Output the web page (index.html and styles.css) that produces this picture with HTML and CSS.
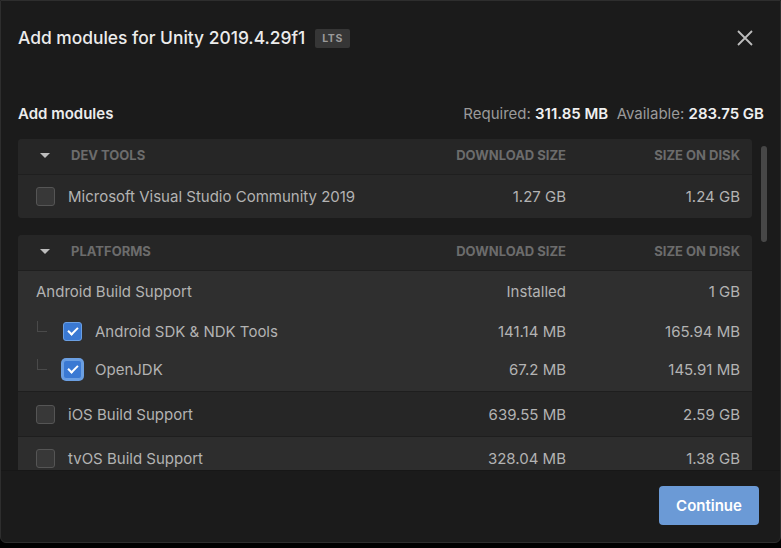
FILE: index.html
```html
<!DOCTYPE html>
<html lang="en">
<head>
  <meta charset="UTF-8" />
  <title>Add modules</title>
  <link rel="stylesheet" href="styles.css">
</head>
<body>

  <div class="dialog">
    <!-- title -->
    <div class="header">
      <h1 class="title">Add modules for Unity 2019.4.29f1</h1>
      <span class="badge">LTS</span>
      <button class="close" aria-label="Close">
        <svg width="16" height="16" viewBox="0 0 16 16">
          <path d="M1 1 L15 15 M15 1 L1 15" stroke="#bdbdbd" stroke-width="1.8" fill="none"/>
        </svg>
      </button>
    </div>

    <div class="summary">
      <h2>Add modules</h2>
      <p class="space">Required: <b>311.85 MB</b>&nbsp;&nbsp;Available: <b>283.75 GB</b></p>
    </div>

    <!-- module list -->
    <div class="scroll">
      <div class="list">

        <div class="card">
          <div class="row head">
            <span class="name"><i class="caret"></i>DEV TOOLS</span>
            <span class="col">DOWNLOAD SIZE</span>
            <span class="col disk">SIZE ON DISK</span>
          </div>
          <div class="row tall">
            <span class="name"><i class="box"></i>Microsoft Visual Studio Community 2019</span>
            <span class="col">1.27 GB</span>
            <span class="col disk">1.24 GB</span>
          </div>
        </div>

        <div class="card">
          <div class="row head">
            <span class="name"><i class="caret"></i>PLATFORMS</span>
            <span class="col">DOWNLOAD SIZE</span>
            <span class="col disk">SIZE ON DISK</span>
          </div>
          <div class="group">
            <div class="row">
              <span class="name">Android Build Support</span>
              <span class="col">Installed</span>
              <span class="col disk">1 GB</span>
            </div>
            <div class="row sub">
              <span class="name"><i class="tree"></i><i class="box checked"></i>Android SDK &amp; NDK Tools</span>
              <span class="col">141.14 MB</span>
              <span class="col disk">165.94 MB</span>
            </div>
            <div class="row sub">
              <span class="name"><i class="tree"></i><i class="box checked focus"></i>OpenJDK</span>
              <span class="col">67.2 MB</span>
              <span class="col disk">145.91 MB</span>
            </div>
          </div>
          <div class="row dark">
            <span class="name"><i class="box"></i>iOS Build Support</span>
            <span class="col">639.55 MB</span>
            <span class="col disk">2.59 GB</span>
          </div>
          <div class="row light">
            <span class="name"><i class="box"></i>tvOS Build Support</span>
            <span class="col">328.04 MB</span>
            <span class="col disk">1.38 GB</span>
          </div>
        </div>

      </div>
      <div class="track"><div class="thumb"></div></div>
    </div>

    <div class="footer">
      <button class="btn">Continue</button>
    </div>
  </div>

</body>
</html>
```

FILE: styles.css
```css
* {
  box-sizing: border-box;
  margin: 0;
  padding: 0;
}
body {
  background: #000;
  font-family: Inter, "Liberation Sans", sans-serif;
  color: #b4b4b4;
}
.dialog {
  width: 781px;
  height: 543px;
  background: #1b1b1b;
  border: 1px solid #2e2e2e;
  border-radius: 0 0 6px 6px;
  display: flex;
  flex-direction: column;
  overflow: hidden;
}

/* ===== header ===== */
.header {
  display: flex;
  align-items: center;
  padding: 25px 27px 0 17px;
  height: 49px;
}
.title {
  font-size: 17.4px;
  font-weight: 500;
  color: #ececec;
  line-height: 24px;
}
.badge {
  margin-left: 10px;
  background: #363636;
  color: #9a9a9a;
  font-size: 10.5px;
  font-weight: 700;
  padding: 3px 7px;
  border-radius: 2px;
  letter-spacing: 0.6px;
}
.close {
  margin-left: auto;
  background: none;
  border: none;
  width: 16px;
  height: 16px;
  display: flex;
}

.summary {
  display: flex;
  align-items: center;
  justify-content: space-between;
  padding: 0 16px 0 17px;
  margin-top: 51px;
  height: 24px;
}
.summary h2 {
  font-size: 15px;
  font-weight: 600;
  color: #ececec;
}
.space {
  font-size: 15px;
  color: #9a9a9a;
}
.space b {
  color: #f0f0f0;
  font-weight: 600;
}

/* ===== list ===== */
.scroll {
  margin-top: 14px;
  height: 331px;
  display: flex;
  padding-left: 17px;
  overflow: hidden;
}
.list {
  width: 734px;
}
.card {
  background: #262626;
  border-radius: 4px;
  overflow: hidden;
  margin-bottom: 17px;
}
.row {
  display: flex;
  align-items: center;
  height: 41px;
  padding: 0 12px 0 18px;
  font-size: 15px;
  color: #b3b3b3;
  border-top: 1px solid #1f1f1f;
  background: #282828;
}
.row.tall {
  height: 44px;
}
.row.head {
  height: 35px;
  padding-bottom: 3px;
  border-top: none;
  background: #262626;
  font-size: 13px;
  font-weight: 700;
  color: #6c6c6c;
}
.name {
  flex: 1;
  display: flex;
  align-items: center;
}
.col {
  width: 140px;
  text-align: right;
}
.col.disk {
  width: 174px;
}
.caret {
  width: 0;
  height: 0;
  border-left: 5px solid transparent;
  border-right: 5px solid transparent;
  border-top: 5px solid #bdbdbd;
  margin: 0 21px 0 4px;
}

.box {
  width: 19px;
  height: 19px;
  border: 1px solid #555;
  background: #383838;
  border-radius: 3px;
  margin-right: 13px;
  display: flex;
  align-items: center;
  justify-content: center;
}
.box.checked {
  background: #3a79d3;
  border-color: #6b9fe2;
}
.box.checked::after {
  content: "";
  width: 8px;
  height: 4px;
  border-left: 2px solid #fff;
  border-bottom: 2px solid #fff;
  transform: translateY(-1px) rotate(-45deg);
}
.box.focus {
  box-shadow: 0 0 0 2px #6b9fe2;
}

.group {
  background: #2f2f2f;
  border-top: 1px solid #1f1f1f;
  padding-bottom: 3px;
}
.group .row {
  background: #2f2f2f;
  border-top: none;
}
.row.sub {
  height: 38px;
}
.tree {
  width: 10px;
  height: 11px;
  border-left: 1px solid #4a4a4a;
  border-bottom: 1px solid #4a4a4a;
  margin: -10px 16px 0 1px;
}
.row.dark {
  background: #262626;
  border-top: 1px solid #1e1e1e;
  height: 45px;
}
.row.light {
  background: #2d2d2d;
  border-top: 1px solid #1e1e1e;
  height: 44px;
}

.track {
  margin-left: 9px;
  width: 6px;
  padding-top: 7px;
}
.thumb {
  height: 96px;
  background: #474747;
  border-radius: 3px;
}

/* ===== footer ===== */
.footer {
  flex: 1;
  display: flex;
  align-items: center;
  justify-content: flex-end;
  padding: 0 21px 3px 0;
  border-top: 1px solid #171717;
}
.btn {
  width: 100px;
  height: 39px;
  background: #6b9ad6;
  color: #fff;
  border: none;
  border-radius: 4px;
  font-family: Inter, "Liberation Sans", sans-serif;
  font-size: 15px;
  font-weight: 600;
}
```
